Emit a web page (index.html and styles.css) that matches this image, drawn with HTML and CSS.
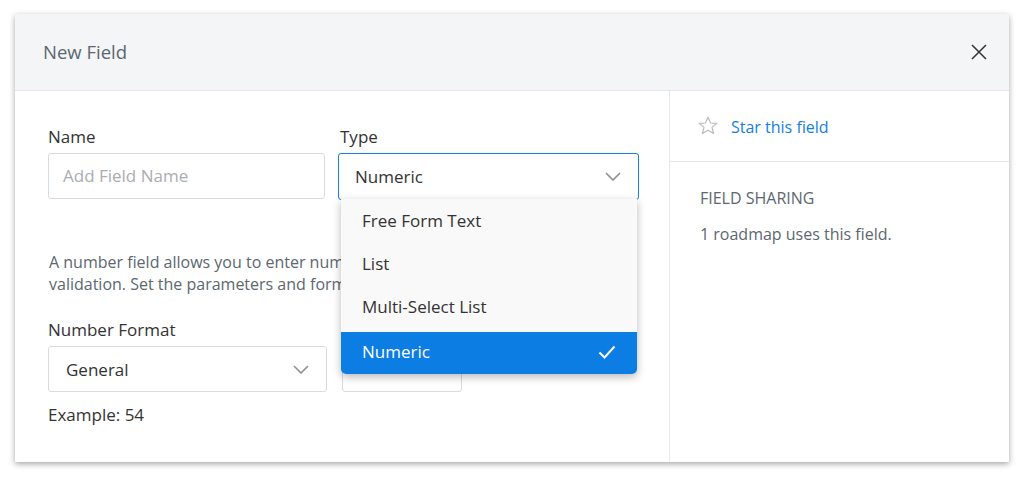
FILE: index.html
```html
<!DOCTYPE html>
<html>
<head>
<meta charset="utf-8">
<link rel="stylesheet" href="styles.css">
</head>
<body>
<div class="modal">
  <div class="header">
    <h1 class="title">New Field</h1>
    <svg class="close" width="16" height="16" viewBox="0 0 16 16"><path d="M1 1L15 15M15 1L1 15" stroke="#333" stroke-width="1.5" fill="none"/></svg>
  </div>
  <div class="body">
    <div class="main">
      <div class="row-top">
        <div class="field name-field">
          <label class="label">Name</label>
          <div class="input placeholder">Add Field Name</div>
        </div>
        <div class="field type-field">
          <label class="label">Type</label>
          <div class="select focused">
            <span>Numeric</span>
            <svg class="chev" width="16" height="9" viewBox="0 0 16 9"><path d="M1 1L8 8L15 1" stroke="#8a8f94" stroke-width="1.6" fill="none"/></svg>
          </div>
          <ul class="menu">
            <li class="item">Free Form Text</li>
            <li class="item">List</li>
            <li class="item">Multi-Select List</li>
            <li class="item active">Numeric
              <svg class="check" width="18" height="14" viewBox="0 0 18 14"><path d="M1.5 7.5L6.5 12.5L16.5 1.5" stroke="#fff" stroke-width="2" fill="none"/></svg>
            </li>
          </ul>
        </div>
      </div>
      <p class="desc">A number field allows you to enter numbers and apply numeric<br>validation. Set the parameters and format for the field below.</p>
      <label class="label">Number Format</label>
      <div class="row-format">
        <div class="select format-select">
          <span>General</span>
          <svg class="chev" width="16" height="9" viewBox="0 0 16 9"><path d="M1 1L8 8L15 1" stroke="#8a8f94" stroke-width="1.6" fill="none"/></svg>
        </div>
        <div class="input small-input"></div>
      </div>
      <div class="example">Example: 54</div>
    </div>
    <div class="side">
      <div class="star-row">
        <svg class="star" width="20" height="19" viewBox="0 0 20 19"><path d="M10 1.2L12.6 7L18.8 7.4L14 11.4L15.6 17.6L10 14.2L4.4 17.6L6 11.4L1.2 7.4L7.4 7Z" stroke="#b8bcc0" stroke-width="1.2" fill="none" stroke-linejoin="round"/></svg>
        <span class="star-link">Star this field</span>
      </div>
      <div class="sharing">
        <div class="sharing-title">FIELD SHARING</div>
        <div class="sharing-text">1 roadmap uses this field.</div>
      </div>
    </div>
  </div>
</div>
</body>
</html>
```
FILE: styles.css
```css
* { box-sizing: border-box; }
html, body { margin: 0; padding: 0; background: #fff; }
html { min-height: 100%; }
body {
  font-family: "Open Sans", "Liberation Sans", sans-serif;
  color: #333;
  padding: 14px 15px 16px 15px;
  min-height: 478px;
}
.modal {
  width: 994px;
  height: 448px;
  background: #fff;
  box-shadow: 0 2px 6px rgba(0,0,0,0.35);
  display: flex;
  flex-direction: column;
}
.header {
  height: 77px;
  background: #f4f5f7;
  border-bottom: 1px solid #e4e6e9;
  display: flex;
  align-items: center;
  justify-content: space-between;
  padding: 0 22px 0 28px;
  flex: none;
}
.title {
  margin: 0;
  font-size: 18.5px;
  font-weight: 400;
  color: #5c6770;
  line-height: 24px;
  padding-bottom: 1px;
}
.close { display: block; }
.body {
  flex: 1;
  display: flex;
}
.main {
  width: 655px;
  border-right: 1px solid #e6e8ea;
  padding: 34px 30px 0 33px;
}
.side { flex: 1; }
.row-top {
  display: flex;
  gap: 13px;
}
.field { position: relative; }
.name-field { width: 277px; }
.type-field { width: 301px; }
.label {
  display: block;
  font-size: 17px;
  line-height: 24px;
  color: #333;
  margin-bottom: 4px;
}
.type-field .label { padding-left: 2px; }
.input {
  height: 46px;
  border: 1px solid #d9dcdf;
  border-radius: 3px;
  background: #fff;
  font-size: 17px;
  line-height: 44px;
  padding: 0 14px;
}
.placeholder { color: #a9adb1; }
.select {
  height: 46px;
  border: 1px solid #d9dcdf;
  border-radius: 3px;
  background: #fff;
  font-size: 17px;
  color: #333;
  display: flex;
  align-items: center;
  justify-content: space-between;
  padding: 0 17px 0 17px;
}
.select.focused {
  border-color: #1580e2;
  height: 47px;
  padding: 0 17px 0 16px;
}
.chev { display: block; }
.menu {
  position: absolute;
  left: 3px;
  right: 2px;
  top: 74px;
  margin: 0;
  padding: 0;
  list-style: none;
  background: #f9f9f9;
  border-radius: 0 0 5px 5px;
  box-shadow: 0 3px 8px rgba(0,0,0,0.28);
  overflow: hidden;
  z-index: 2;
}
.item {
  height: 43px;
  display: flex;
  align-items: center;
  justify-content: space-between;
  padding: 0 21px;
  font-size: 17px;
  color: #333;
}
.item.active {
  background: #0b7de3;
  color: #fff;
  height: 42px;
  margin-top: 4px;
  padding-bottom: 3px;
}
.check { display: block; margin-top: 1px; }
.desc {
  margin: 51px 0 23px 1px;
  font-size: 16px;
  line-height: 22px;
  color: #5c6770;
  white-space: nowrap;
}
.row-format {
  display: flex;
  gap: 15px;
}
.format-select { width: 279px; }
.small-input { width: 120px; }
.example {
  margin-top: 11px;
  font-size: 17px;
  line-height: 24px;
  color: #333;
}
.star-row {
  height: 71px;
  border-bottom: 1px solid #e6e8ea;
  display: flex;
  align-items: center;
  padding: 2px 0 0 28px;
  gap: 13px;
}
.star { display: block; margin-top: -3px; }
.star-link {
  font-size: 16px;
  color: #1580e2;
}
.sharing { padding: 25px 30px 0 30px; }
.sharing-title {
  font-size: 16px;
  line-height: 22px;
  color: #5c6770;
}
.sharing-text {
  margin-top: 14px;
  font-size: 16px;
  line-height: 22px;
  color: #5c6770;
}
```
